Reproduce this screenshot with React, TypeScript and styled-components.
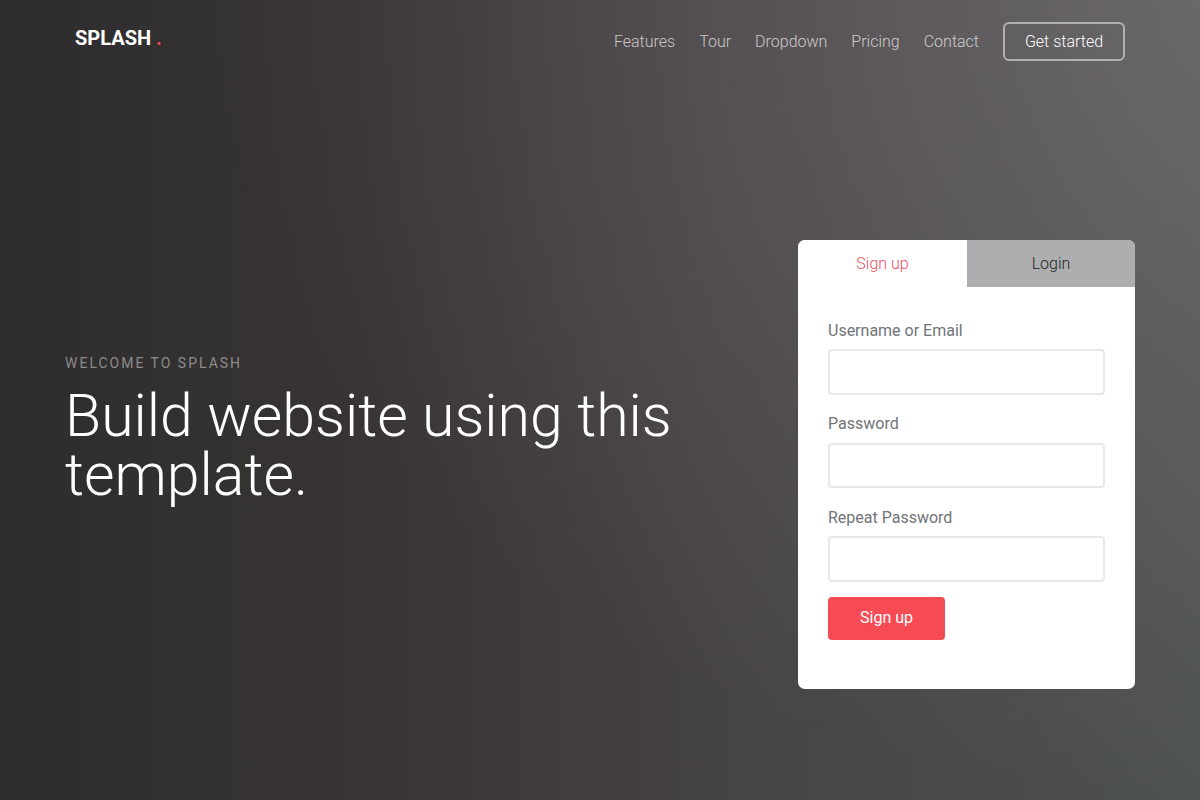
import React from 'react';
import styled, { createGlobalStyle } from 'styled-components';

const GlobalStyle = createGlobalStyle`
  html, body {
    margin: 0;
    padding: 0;
    font-family: Roboto, "Liberation Sans", sans-serif;
  }
  * {
    box-sizing: border-box;
  }
`;

const Page = styled.div`
  width: 1200px;
  height: 800px;
  overflow: hidden;
  background:
    radial-gradient(ellipse 1000px 800px at 100% 0, rgba(255, 219, 238, 0.16), rgba(255, 219, 238, 0)),
    linear-gradient(90deg, #2d2c2c 0%, #383434 30%, #464344 60%, #4a4c4c 85%, #4e5252 100%);
`;

const Header = styled.header`
  display: flex;
  justify-content: space-between;
  align-items: flex-start;
  padding: 22px 75px 0;
`;

const Logo = styled.a`
  font-size: 20px;
  line-height: 32px;
  font-weight: 700;
  color: #fff;
`;

const LogoDot = styled.span`
  color: #f64b55;
  margin-left: 5px;
`;

const Nav = styled.nav`
  display: flex;
  align-items: center;
  gap: 24px;
`;

const NavLink = styled.a`
  font-size: 16px;
  font-weight: 300;
  color: rgba(255, 255, 255, 0.7);
`;

const NavButton = styled.a`
  display: block;
  width: 122px;
  height: 39px;
  border: 2px solid rgba(255, 255, 255, 0.5);
  border-radius: 6px;
  font-size: 16px;
  font-weight: 300;
  line-height: 35px;
  text-align: center;
  color: #fff;
`;

const Hero = styled.main`
  display: flex;
  justify-content: space-between;
  align-items: center;
  margin-top: 179px;
  padding: 0 65px;
`;

const Intro = styled.div`
  width: 640px;
  margin-bottom: 72px;
`;

const Eyebrow = styled.div`
  font-size: 14px;
  line-height: 20px;
  letter-spacing: 2px;
  text-transform: uppercase;
  color: rgba(255, 255, 255, 0.45);
`;

const Title = styled.h1`
  margin: 13px 0 0;
  font-size: 59px;
  line-height: 59px;
  font-weight: 300;
  color: #fff;
`;

const Card = styled.div`
  width: 337px;
  height: 449px;
  background: #fff;
  border-radius: 7px;
  overflow: hidden;
`;

const Tabs = styled.div`
  display: grid;
  grid-template-columns: 169px 168px;
  height: 47px;
`;

const Tab = styled.a<{ $active?: boolean }>`
  font-size: 16px;
  font-weight: 300;
  line-height: 47px;
  text-align: center;
  color: ${(p) => (p.$active ? '#f0505f' : '#212529')};
  background: ${(p) => (p.$active ? '#fff' : '#aeaeb0')};
`;

const Form = styled.form`
  padding: 31.5px 30px 0;
`;

const Field = styled.div`
  margin-bottom: 17.5px;

  &:last-of-type {
    margin-bottom: 15px;
  }
`;

const Label = styled.label`
  display: block;
  margin-bottom: 6.5px;
  font-size: 16px;
  line-height: 24px;
  color: #707479;
`;

const Input = styled.input`
  display: block;
  width: 100%;
  height: 45.5px;
  border: 2px solid #e8e8e8;
  border-radius: 4px;
  background: #fff;
`;

const Submit = styled.button`
  display: block;
  width: 117px;
  height: 43px;
  padding: 0 0 2px;
  border: 0;
  border-radius: 4px;
  background: #f64b55;
  color: #fff;
  font-family: inherit;
  font-size: 16px;
`;

export default function App() {
  return (
    <Page>
      <GlobalStyle />
      <Header>
        <Logo>
          SPLASH<LogoDot>.</LogoDot>
        </Logo>
        <Nav>
          <NavLink>Features</NavLink>
          <NavLink>Tour</NavLink>
          <NavLink>Dropdown</NavLink>
          <NavLink>Pricing</NavLink>
          <NavLink>Contact</NavLink>
          <NavButton>Get started</NavButton>
        </Nav>
      </Header>
      <Hero>
        <Intro>
          <Eyebrow>Welcome to Splash</Eyebrow>
          <Title>Build website using this template.</Title>
        </Intro>
        <Card>
          <Tabs>
            <Tab $active>Sign up</Tab>
            <Tab>Login</Tab>
          </Tabs>
          <Form>
            <Field>
              <Label>Username or Email</Label>
              <Input type="text" />
            </Field>
            <Field>
              <Label>Password</Label>
              <Input type="password" />
            </Field>
            <Field>
              <Label>Repeat Password</Label>
              <Input type="password" />
            </Field>
            <Submit type="button">Sign up</Submit>
          </Form>
        </Card>
      </Hero>
    </Page>
  );
}
